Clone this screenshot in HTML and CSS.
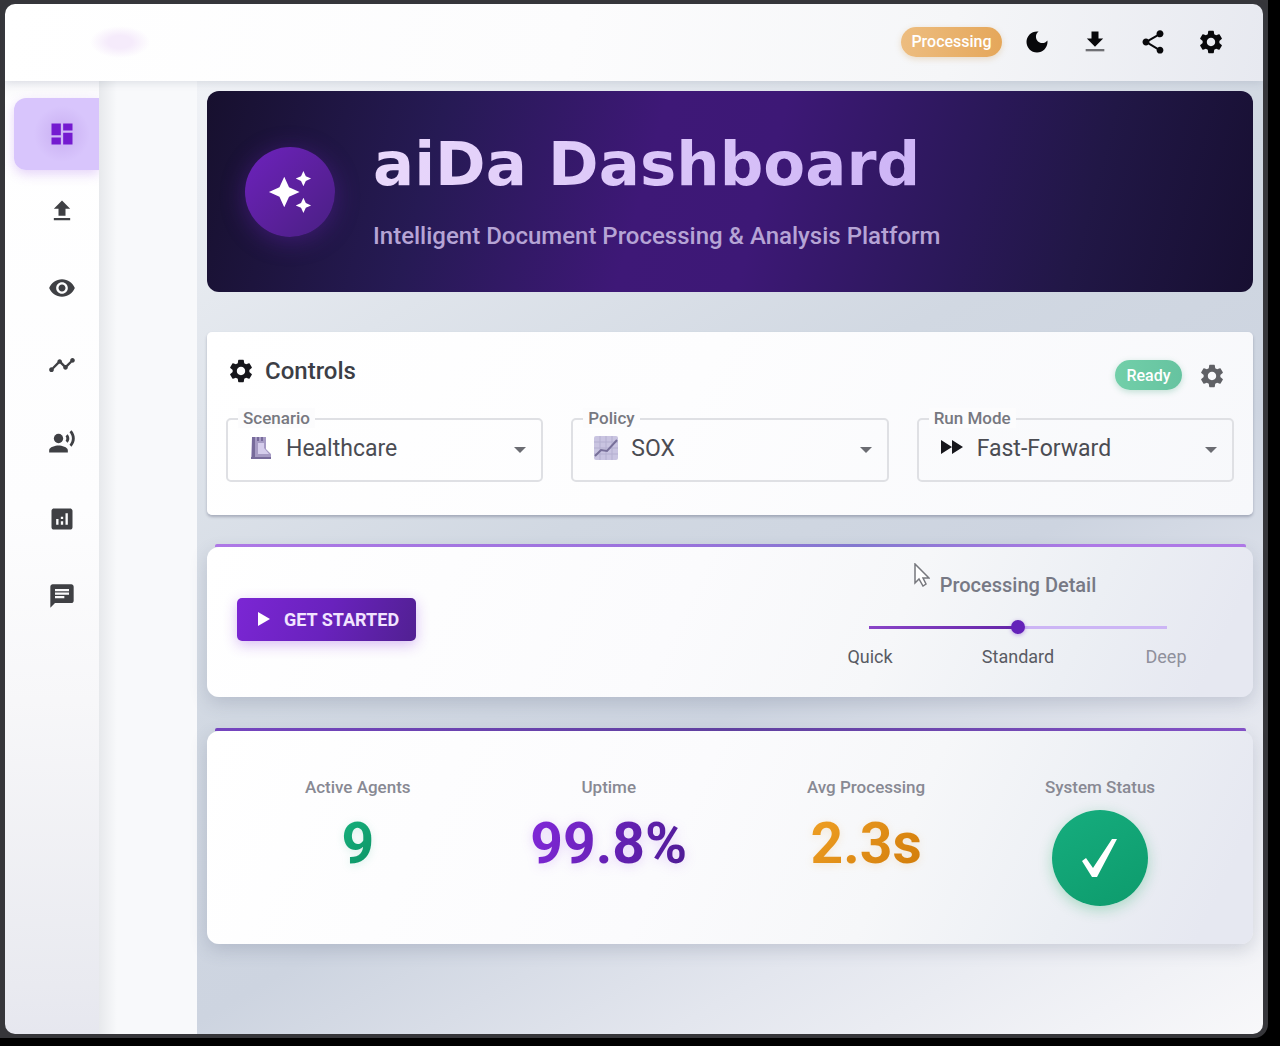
FILE: index.html
```html
<!DOCTYPE html>
<html lang="en">
<head>
<meta charset="utf-8">
<meta name="viewport" content="width=device-width, initial-scale=1">
<title>aiDa Dashboard</title>
<link rel="stylesheet" href="styles.css">
</head>
<body>
<svg class="defs" aria-hidden="true">
  <symbol id="gear" viewBox="0 0 24 24"><path d="M19.14 12.94c.04-.3.06-.61.06-.94 0-.32-.02-.64-.07-.94l2.03-1.58c.18-.14.23-.41.12-.61l-1.92-3.32c-.12-.22-.37-.29-.59-.22l-2.39.96c-.5-.38-1.03-.7-1.62-.94l-.36-2.54c-.04-.24-.24-.41-.48-.41h-3.84c-.24 0-.43.17-.47.41l-.36 2.54c-.59.24-1.13.57-1.62.94l-2.39-.96c-.22-.08-.47 0-.59.22L2.74 8.87c-.12.21-.08.47.12.61l2.03 1.58c-.05.3-.09.63-.09.94s.02.64.07.94l-2.03 1.58c-.18.14-.23.41-.12.61l1.92 3.32c.12.22.37.29.59.22l2.39-.96c.5.38 1.03.7 1.62.94l.36 2.54c.05.24.24.41.48.41h3.84c.24 0 .44-.17.47-.41l.36-2.54c.59-.24 1.13-.56 1.62-.94l2.39.96c.22.08.47 0 .59-.22l1.92-3.32c.12-.22.07-.47-.12-.61l-2.01-1.58zM12 15.6c-1.98 0-3.6-1.62-3.6-3.6s1.62-3.6 3.6-3.6 3.6 1.62 3.6 3.6-1.62 3.6-3.6 3.6z"/></symbol>
</svg>
<div class="window">
  <header class="topbar">
    <span class="brand-glow"></span>
    <span class="chip chip-processing">Processing</span>
    <button class="icon-button" type="button" aria-label="Dark mode"><svg viewBox="0 0 24 24"><path d="M12 3c-4.97 0-9 4.03-9 9s4.03 9 9 9 9-4.03 9-9c0-.46-.04-.92-.1-1.36-.98 1.37-2.58 2.26-4.4 2.26-2.98 0-5.4-2.42-5.4-5.4 0-1.81.89-3.42 2.26-4.4-.44-.06-.9-.1-1.36-.1z"/></svg></button>
    <button class="icon-button" type="button" aria-label="Download"><svg viewBox="0 0 24 24"><path d="M19 9h-4V3H9v6H5l7 7 7-7z"/><path class="soft" d="M4 18h16v2H4z"/></svg></button>
    <button class="icon-button" type="button" aria-label="Share"><svg viewBox="0 0 24 24"><path d="M18 16.08c-.76 0-1.44.3-1.96.77L8.91 12.7c.05-.23.09-.46.09-.7s-.04-.47-.09-.7l7.05-4.11c.54.5 1.25.81 2.04.81 1.66 0 3-1.34 3-3s-1.34-3-3-3-3 1.34-3 3c0 .24.04.47.09.7L8.04 9.81C7.5 9.31 6.79 9 6 9c-1.66 0-3 1.34-3 3s1.34 3 3 3c.79 0 1.5-.31 2.04-.81l7.12 4.16c-.05.21-.08.43-.08.65 0 1.61 1.31 2.92 2.92 2.92s2.92-1.31 2.92-2.92-1.31-2.92-2.92-2.92z"/></svg></button>
    <button class="icon-button" type="button" aria-label="Settings"><svg><use href="#gear"/></svg></button>
  </header>
  <div class="shell">
    <nav class="rail" aria-label="Sections">
      <a class="rail-item active" href="#dashboard" aria-label="Dashboard"><svg viewBox="0 0 24 24"><path d="M3 13h8V3H3v10zm0 8h8v-6H3v6zm10 0h8V11h-8v10zm0-18v6h8V3h-8z"/></svg></a>
      <a class="rail-item" href="#upload" aria-label="Upload"><svg viewBox="0 0 24 24"><path d="M9 16h6v-6h4l-7-7-7 7h4v6zm-4 2h14v2H5v-2z"/></svg></a>
      <a class="rail-item" href="#view" aria-label="View"><svg viewBox="0 0 24 24"><path d="M12 4.5C7 4.5 2.73 7.61 1 12c1.73 4.39 6 7.5 11 7.5s9.27-3.11 11-7.5c-1.73-4.39-6-7.5-11-7.5zM12 17c-2.76 0-5-2.24-5-5s2.24-5 5-5 5 2.24 5 5-2.24 5-5 5zm0-8c-1.66 0-3 1.34-3 3s1.34 3 3 3 3-1.34 3-3-1.34-3-3-3z"/></svg></a>
      <a class="rail-item" href="#timeline" aria-label="Timeline"><svg viewBox="0 0 24 24"><path d="M23 8c0 1.1-.9 2-2 2-.18 0-.35-.02-.51-.07l-3.56 3.55c.05.16.07.34.07.52 0 1.1-.9 2-2 2s-2-.9-2-2c0-.18.02-.36.07-.52l-2.55-2.55c-.16.05-.34.07-.52.07s-.36-.02-.52-.07l-4.55 4.56c.05.16.07.33.07.51 0 1.1-.9 2-2 2s-2-.9-2-2 .9-2 2-2c.18 0 .35.02.51.07l4.56-4.55C8.02 9.36 8 9.18 8 9c0-1.1.9-2 2-2s2 .9 2 2c0 .18-.02.36-.07.52l2.55 2.55c.16-.05.34-.07.52-.07s.36.02.52.07l3.55-3.56C19.02 8.35 19 8.18 19 8c0-1.1.9-2 2-2s2 .9 2 2z"/></svg></a>
      <a class="rail-item" href="#agents" aria-label="Agents"><svg viewBox="0 0 24 24"><circle cx="9" cy="9" r="4"/><path d="M9 15c-2.67 0-8 1.34-8 4v2h16v-2c0-2.66-5.33-4-8-4zm7.76-9.64l-1.68 1.69c.84 1.18.84 2.71 0 3.89l1.68 1.69c2.02-2.02 2.02-5.07 0-7.27zM20.07 2l-1.63 1.63c2.77 3.02 2.77 7.56 0 10.74L20.07 16c3.9-3.89 3.91-9.95 0-14z"/></svg></a>
      <a class="rail-item" href="#analytics" aria-label="Analytics"><svg viewBox="0 0 24 24"><path d="M19 3H5c-1.1 0-2 .9-2 2v14c0 1.1.9 2 2 2h14c1.1 0 2-.9 2-2V5c0-1.100-.9-2-2-2zM9 17H7v-5h2v5zm4 0h-2v-3h2v3zm0-5h-2v-2h2v2zm4 5h-2V7h2v10z"/></svg></a>
      <a class="rail-item" href="#chat" aria-label="Chat"><svg viewBox="0 0 24 24"><path d="M20 2H4c-1.100 0-2 .9-2 2v18l4-4h14c1.100 0 2-.9 2-2V4c0-1.100-.9-2-2-2zM6 9h12v2H6V9zm8 5H6v-2h8v2zm4-6H6V6h12v2z"/></svg></a>
    </nav>
    <aside class="drawer"></aside>
    <main class="content">
      <section class="banner">
        <span class="banner-logo"><svg viewBox="0 0 24 24"><path d="M19 9l1.250-2.750L23 5l-2.750-1.250L19 1l-1.250 2.750L15 5l2.750 1.250L19 9zm-7.500.5L9 4 6.500 9.500 1 12l5.500 2.500L9 20l2.500-5.500L17 12l-5.500-2.500zM19 15l-1.250 2.750L15 19l2.750 1.250L19 23l1.250-2.750L23 19l-2.750-1.250L19 15z"/></svg></span>
        <div class="banner-text">
          <h1>aiDa Dashboard</h1>
          <p>Intelligent Document Processing &amp; Analysis Platform</p>
        </div>
      </section>

      <section class="controls">
        <div class="controls-head">
          <div class="controls-title">
            <svg><use href="#gear"/></svg>
            <h2>Controls</h2>
          </div>
          <span class="chip chip-ready">Ready</span>
          <button class="icon-button muted" type="button" aria-label="Control settings"><svg><use href="#gear"/></svg></button>
        </div>
        <div class="fields">
          <div class="field">
            <label for="scenario">Scenario</label>
            <select id="scenario"><option>Healthcare</option></select>
            <svg class="field-icon" viewBox="0 0 24 24"><path fill="#a69bc4" d="M3 1h14v12l5 5v5H2z"/><path fill="#776b9b" d="M3 1h3v21H3zM8 1h2v4H8zm4 0h2v4h-2zM2 21h20v2H2z"/><path fill="#d5cdec" d="M9 7h6v5l5 6H9z"/></svg>
            <svg class="field-arrow" viewBox="0 0 12 6"><path d="M0 0h12L6 6z"/></svg>
          </div>
          <div class="field">
            <label for="policy">Policy</label>
            <select id="policy"><option>SOX</option></select>
            <svg class="field-icon" viewBox="0 0 24 24"><rect width="24" height="24" rx="2" fill="#c9c4e1"/><path stroke="#b4afd0" d="M0 6h24M0 12h24M0 18h24M6 0v24M12 0v24M18 0v24"/><path fill="none" stroke="#776f99" stroke-width="2" d="M1 20l6-6 6 1L23 4"/></svg>
            <svg class="field-arrow" viewBox="0 0 12 6"><path d="M0 0h12L6 6z"/></svg>
          </div>
          <div class="field">
            <label for="mode">Run Mode</label>
            <select id="mode"><option>Fast-Forward</option></select>
            <svg class="field-icon" viewBox="0 0 24 24"><path fill="#17171c" d="M1 4l11 7-11 7zM12 4l11 7-11 7z"/></svg>
            <svg class="field-arrow" viewBox="0 0 12 6"><path d="M0 0h12L6 6z"/></svg>
          </div>
        </div>
      </section>

      <section class="panel action">
        <button class="start" type="button"><svg viewBox="0 0 12 14"><path d="M0 0l12 7-12 7z"/></svg>GET STARTED</button>
        <div class="detail">
          <label for="detail">Processing Detail</label>
          <input id="detail" type="range" min="0" max="2" step="1" value="1">
          <div class="marks"><span>Quick</span><span>Standard</span><span class="off">Deep</span></div>
        </div>
        <svg class="cursor" viewBox="0 0 16 24"><path d="M1 1v19l4-4 4 7 3-2-3-6h6z"/></svg>
      </section>

      <section class="panel stats">
        <div class="stat"><span class="stat-label">Active Agents</span><strong class="stat-value green">9</strong></div>
        <div class="stat"><span class="stat-label">Uptime</span><strong class="stat-value purple">99.8%</strong></div>
        <div class="stat"><span class="stat-label">Avg Processing</span><strong class="stat-value orange">2.3s</strong></div>
        <div class="stat"><span class="stat-label">System Status</span><span class="status-ok"><svg viewBox="0 0 36 40"><path d="M0 23l4-3 7 10L30 1h5L15 39h-5z"/></svg></span></div>
      </section>
    </main>
  </div>
</div>
</body>
</html>
```
FILE: styles.css
```css
* { box-sizing: border-box; }

body {
  margin: 0;
  min-height: 100vh;
  padding: 0 12px 8px 0;
  display: flex;
  background: #000;
  color: #3c3e46;
  font-family: Roboto, "Liberation Sans", sans-serif;
}

h1, h2, p { margin: 0; }
button, select, input { font: inherit; }
svg { display: block; flex: none; }
.defs { position: absolute; width: 0; height: 0; }

.window {
  flex: 1;
  min-width: 0;
  display: flex;
  flex-direction: column;
  border: 4px solid #36363a;
  border-width: 4px 5px;
  border-radius: 0 0 14px 0;
  background: #36363a;
}

.topbar {
  position: relative;
  display: flex;
  align-items: center;
  justify-content: flex-end;
  gap: 12px;
  height: 77px;
  padding: 0 29px 2px;
  border-radius: 10px 10px 0 0;
  background: linear-gradient(100deg, #fff 0%, #fcfcfd 45%, #f5f6f8 75%, #e7e9f0 100%);
  box-shadow: 0 2px 8px rgba(70, 80, 110, 0.15);
}

.brand-glow {
  width: 60px;
  height: 32px;
  margin-right: auto;
  margin-left: 56px;
  background: radial-gradient(closest-side, #f5ebfb 40%, transparent);
}

.icon-button {
  display: grid;
  place-items: center;
  width: 46px;
  height: 46px;
  padding: 0;
  border: 0;
  border-radius: 50%;
  background: none;
  color: #08080b;
}
.icon-button svg, .controls-title svg { width: 28px; height: 28px; fill: currentColor; }
.icon-button.muted { width: 28px; height: 28px; color: #606166; }
.soft { opacity: 0.55; }

.chip {
  display: inline-flex;
  align-items: center;
  justify-content: center;
  height: 30px;
  border-radius: 15px;
  color: #fff;
  font-size: 16px;
  font-weight: 500;
}
.chip-processing {
  width: 101px;
  background: linear-gradient(90deg, #edbd80, #e5a75a);
  box-shadow: 0 2px 6px rgba(200, 140, 50, 0.25);
}
.chip-ready {
  width: 67px;
  background: linear-gradient(90deg, #72cfa9, #66c3a0);
  box-shadow: 0 2px 6px rgba(30, 150, 100, 0.25);
}

.shell { flex: 1; display: flex; }

.rail {
  flex: none;
  display: flex;
  flex-direction: column;
  gap: 5px;
  width: 94px;
  padding: 17px 0 0 9px;
  border-radius: 0 0 0 10px;
  background: linear-gradient(180deg, #f6f6f9 0, #fff 20px, #fdfdfe 45%, #f7f7f9 65%, #e9eaf0 95%, #e6e7ef 100%);
}
.rail-item {
  display: grid;
  place-items: center;
  height: 72px;
  padding-left: 11px;
  border-radius: 12px 0 0 12px;
  color: #3f4044;
}
.rail-item svg { width: 28px; height: 28px; fill: currentColor; }
.rail-item.active {
  background: radial-gradient(circle at 48px 36px, #cfb8f6 12px, #d8c5fc 28px);
  color: #741bd0;
  box-shadow: 0 4px 12px rgba(150, 80, 230, 0.25);
}

.drawer {
  flex: none;
  width: 98px;
  background: linear-gradient(90deg, #e7e9ec 0, #f8f9fb 18px);
}

.content {
  flex: 1;
  min-width: 0;
  padding: 10px 10px 20px;
  border-radius: 0 0 10px 0;
  background: linear-gradient(150deg, #f0f2f6 0%, #dfe4eb 22%, #d1d8e2 42%, #cdd4e0 60%, #e3e6ee 78%, #f8f8fa 100%);
}

.banner {
  display: flex;
  align-items: center;
  gap: 38px;
  height: 201px;
  padding: 0 38px;
  border-radius: 12px;
  background: linear-gradient(105deg, #17102e 0%, #261a54 22%, #3e1877 42%, #3d1876 53%, #2a1858 72%, #211746 83%, #170f31 100%);
}
.banner-logo {
  display: grid;
  place-items: center;
  flex: none;
  width: 90px;
  height: 90px;
  border-radius: 50%;
  background: linear-gradient(135deg, #6d22bd, #592099 60%, #482083);
  box-shadow: 0 4px 24px rgba(110, 35, 190, 0.4);
}
.banner-logo svg { width: 46px; height: 46px; fill: #fff; }
.banner-text { display: flex; flex-direction: column; gap: 16px; }
.banner h1 {
  width: fit-content;
  font: bold 61px/72px "DejaVu Sans", sans-serif;
  background: linear-gradient(90deg, #e9d8fb, #cdb4f6);
  background-clip: text;
  color: transparent;
}
.banner p { color: #b6a4d5; font-size: 24px; font-weight: 500; line-height: 40px; }

.controls {
  margin-top: 40px;
  padding: 20px 19px 33px;
  border-radius: 5px;
  background: linear-gradient(120deg, #fff, #fdfdfe 45%, #f7f8fb);
  box-shadow: 0 2px 3px rgba(70, 75, 100, 0.35);
}
.controls-head {
  display: flex;
  align-items: flex-end;
  justify-content: flex-end;
  gap: 16px;
  height: 38px;
  padding: 0 8px 0 1px;
}
.controls-title {
  display: flex;
  align-items: center;
  align-self: flex-end;
  gap: 10px;
  margin-right: auto;
  padding-bottom: 5px;
  color: #17171c;
}
.controls h2 { color: #3c3e46; font-size: 24px; font-weight: 500; line-height: 28px; }

.fields {
  display: grid;
  grid-template-columns: repeat(3, 1fr);
  gap: 28px;
  margin-top: 28px;
}
.field { position: relative; }
.field label {
  position: absolute;
  top: -10px;
  left: 12px;
  padding: 0 5px;
  background: #fcfcfd;
  color: #777880;
  font-size: 17px;
  font-weight: 500;
  line-height: 20px;
}
.field select {
  display: block;
  width: 100%;
  height: 64px;
  padding: 0 40px 3px 58px;
  appearance: none;
  border: 2px solid #dfe0e4;
  border-radius: 5px;
  background: transparent;
  color: #4b4c53;
  font-size: 23px;
}
.field-icon { position: absolute; top: 18px; left: 23px; width: 24px; height: 24px; }
.field-arrow { position: absolute; top: 29px; right: 17px; width: 12px; height: 6px; fill: #6b6c72; }

.panel {
  position: relative;
  margin-top: 32px;
  border-radius: 12px;
  background: linear-gradient(115deg, #fff 0%, #fbfbfd 45%, #f6f7f9 65%, #eceff4 82%, #e6e8f1 95%);
  box-shadow: 0 6px 18px rgba(70, 80, 110, 0.2);
}
.panel::before {
  content: "";
  position: absolute;
  inset: -3px 7px auto 8px;
  height: 3px;
  border-radius: 2px 2px 0 0;
  background: linear-gradient(90deg, #ae78e6, #9a72dc 45%, #8378cf 62%, #ae78e6 85%);
}
.stats::before { background: linear-gradient(90deg, #7545bf, #60409f 50%, #8351c6); }

.action {
  display: flex;
  align-items: center;
  justify-content: space-between;
  padding: 24px 13px 30px 30px;
}
.start {
  display: flex;
  align-items: center;
  gap: 14px;
  height: 43px;
  padding: 0 17px 0 21px;
  border: 0;
  border-radius: 5px;
  background: linear-gradient(110deg, #7b26d4, #6922bd 50%, #512092);
  box-shadow: 0 4px 14px rgba(130, 40, 220, 0.3);
  color: #f1e4ff;
  font-size: 18px;
  font-weight: 700;
}
.start svg { width: 12px; height: 14px; fill: #fff; }

.detail { display: flex; flex-direction: column; align-items: center; width: 444px; }
.detail label { color: #777985; font-size: 20px; font-weight: 500; line-height: 28px; }
.detail input {
  width: 298px;
  height: 16px;
  margin: 20px 0 12px;
  appearance: none;
  background: linear-gradient(90deg, #8a45c8, #6425a8 50%, #ccb5f5 50%) center / 100% 3px no-repeat;
}
.detail input::-webkit-slider-thumb {
  appearance: none;
  width: 14px;
  height: 14px;
  border-radius: 50%;
  background: #6422b9;
  box-shadow: 0 1px 4px rgba(110, 40, 200, 0.4);
}
.marks {
  display: grid;
  grid-template-columns: repeat(3, 1fr);
  width: 100%;
  color: #595b63;
  font-size: 18px;
  line-height: 20px;
  text-align: center;
}
.marks .off { color: #8f909c; }

.cursor {
  position: absolute;
  top: 16px;
  right: 323px;
  width: 16px;
  height: 24px;
  fill: #fff;
  stroke: #77787e;
  stroke-width: 1.5;
}

.stats { display: flex; justify-content: space-around; padding: 44px 38px 38px; margin-top: 34px; }
.stat { display: flex; flex-direction: column; align-items: center; gap: 11px; }
.stat-label { color: #888993; font-size: 17px; font-weight: 500; line-height: 24px; }
.stat-value {
  font-size: 57px;
  line-height: 68px;
  background-clip: text;
  color: transparent;
}
.green { background-image: linear-gradient(135deg, #18b47f, #0b8f62); filter: drop-shadow(0 2px 4px rgba(20, 170, 120, 0.15)); }
.purple { background-image: linear-gradient(110deg, #8228da, #4d1b93); filter: drop-shadow(0 2px 6px rgba(140, 50, 230, 0.2)); }
.orange { background-image: linear-gradient(135deg, #f0a126, #d07a08); filter: drop-shadow(0 2px 4px rgba(230, 150, 30, 0.15)); }
.status-ok {
  display: grid;
  place-items: center;
  width: 96px;
  height: 96px;
  border-radius: 50%;
  background: linear-gradient(150deg, #16ad7e, #0d9b6c);
  box-shadow: 0 4px 14px rgba(20, 170, 90, 0.3);
}
.status-ok svg { width: 36px; height: 40px; fill: #fff; }
```
